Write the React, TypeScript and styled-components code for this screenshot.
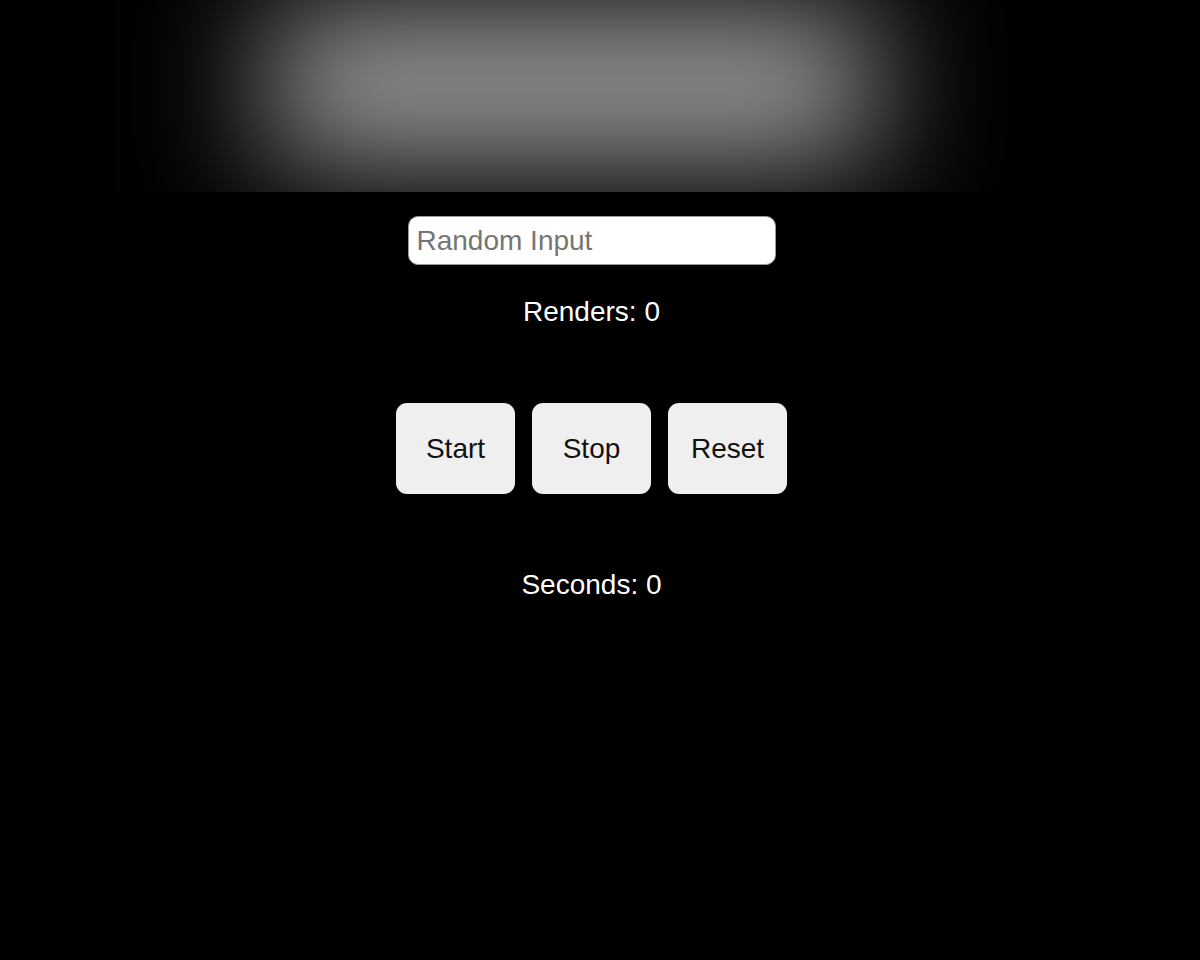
import { useEffect, useRef, useState } from 'react';
import styled, { createGlobalStyle } from 'styled-components';

const GlobalStyle = createGlobalStyle`
  html, body {
    margin: 0;
    padding: 0;
    background: #000;
  }
  body {
    font-family: 'Liberation Sans', Arial, sans-serif;
  }
`;

const Page = styled.div`
  display: flex;
  flex-direction: column;
  align-items: center;
  min-height: 960px;
  padding-right: 17px;
  box-sizing: border-box;
`;

const Header = styled.header`
  width: 100%;
  height: 192px;
  overflow: hidden;
  display: flex;
  justify-content: center;
  align-items: flex-start;
`;

const Glow = styled.div`
  width: 590px;
  height: 140px;
  margin-top: 15px;
  margin-right: 42px;
  background: #9c9c9c;
  box-shadow: 0 0 0 50px #171717;
  filter: blur(60px);
`;

const TextInput = styled.input`
  box-sizing: border-box;
  width: 368px;
  height: 49px;
  margin-top: 24px;
  padding: 0 8px;
  border: 1px solid #9a9a9a;
  border-radius: 10px;
  background: #fff;
  font-family: 'Liberation Sans', Arial, sans-serif;
  font-size: 28px;
  color: #111;
  outline: none;

  &::placeholder {
    color: #757575;
  }
`;

const Counter = styled.p<{ $gap: number }>`
  margin: ${(p) => p.$gap}px 0 0;
  font-size: 28px;
  line-height: 32px;
  color: #fff;
`;

const ButtonRow = styled.div`
  display: flex;
  gap: 17px;
  margin-top: 75px;
`;

const Button = styled.button`
  width: 119px;
  height: 91px;
  border: none;
  border-radius: 11px;
  background: #efefef;
  color: #111;
  font-family: 'Liberation Sans', Arial, sans-serif;
  font-size: 28px;
  cursor: pointer;
`;

export default function App() {
  const [seconds, setSeconds] = useState(0);
  const [text, setText] = useState('');
  const renders = useRef(0);
  const timer = useRef<ReturnType<typeof setInterval> | null>(null);

  useEffect(() => {
    renders.current += 1;
  });

  const start = () => {
    if (timer.current) return;
    timer.current = setInterval(() => setSeconds((s) => s + 1), 1000);
  };

  const stop = () => {
    if (timer.current) clearInterval(timer.current);
    timer.current = null;
  };

  const reset = () => {
    stop();
    setSeconds(0);
  };

  return (
    <>
      <GlobalStyle />
      <Page>
        <Header>
          <Glow />
        </Header>
        <TextInput
          placeholder="Random Input"
          value={text}
          onChange={(e) => setText(e.target.value)}
        />
        <Counter $gap={31}>Renders: {renders.current}</Counter>
        <ButtonRow>
          <Button onClick={start}>Start</Button>
          <Button onClick={stop}>Stop</Button>
          <Button onClick={reset}>Reset</Button>
        </ButtonRow>
        <Counter $gap={75}>Seconds: {seconds}</Counter>
      </Page>
    </>
  );
}
